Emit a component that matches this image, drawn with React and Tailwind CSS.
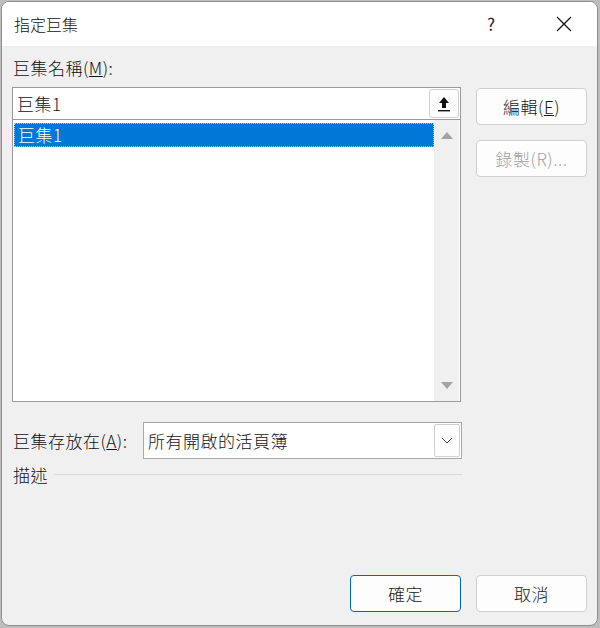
import React from "react";

const font = { fontFamily: '"Noto Sans CJK TC", "Noto Sans", sans-serif' };

const Btn = ({ children, primary, disabled, className = "" }) => (
  <div
    className={`flex items-center justify-center h-[37px] w-[111px] rounded-[4px] bg-[#fdfdfd] text-[17px] font-light ${
      primary ? "border border-[#0067c0]" : "border border-[#d0d0d0]"
    } ${disabled ? "text-[#a0a0a0] bg-[#f5f5f5]" : "text-[#1a1a1a]"} ${className}`}
  >
    {children}
  </div>
);

export default function App() {
  return (
    <div className="w-[600px] h-[628px] bg-[#bdbdbd] p-[1px] pr-[2px] pb-[2px]" style={font}>
      <div className="h-full w-full rounded-[8px] overflow-hidden border border-[#8f8f8f] bg-[#f0f0f0] flex flex-col">
        {/* title bar */}
        <div className="h-[44px] bg-white flex items-center pl-[12px] shrink-0">
          <span className="text-[16px] font-light text-[#111]">指定巨集</span>
          <span className="ml-auto text-[17px] text-[#222] mr-[60px]">?</span>
          <svg width="18" height="18" viewBox="0 0 18 18" className="mr-[24px]">
            <path d="M2 2 L16 16 M16 2 L2 16" stroke="#111" strokeWidth="1.3" />
          </svg>
        </div>

        <div className="flex-1 flex flex-col px-[10px] pt-[10px] pb-[13px] text-[17px] font-light tracking-[0.5px]">
          <div className="flex gap-[15px]">
            <div className="w-[450px] flex flex-col">
              <div className="text-[#111] leading-[24px] pl-[1px]">
                巨集名稱(<span className="underline">M</span>):
              </div>
              <div className="mt-[7px] h-[33px] bg-white border border-[#9a9a9a] flex items-center pl-[4px] pr-[1px]">
                <span className="text-[#111] leading-none">巨集1</span>
                <div className="ml-auto w-[30px] h-[29px] rounded-[3px] border border-[#d0d0d0] bg-[#fdfdfd] flex items-center justify-center">
                  <svg width="12" height="16" viewBox="0 0 12 16">
                    <path d="M6 1 L11 7 L8 7 L8 12 L4 12 L4 7 L1 7 Z" fill="#111" />
                    <rect x="0" y="14" width="12" height="1.4" fill="#111" />
                  </svg>
                </div>
              </div>
              <div className="h-[282px] bg-white border border-[#9a9a9a] border-t-0 flex">
                <div className="flex-1 pt-[3px] pl-[1px]">
                  <div className="h-[24px] bg-[#0078d7] border border-dotted border-[#9cc7ee] flex items-center pl-[3px] text-white">
                    巨集1
                  </div>
                </div>
                <div className="w-[25px] bg-[#f0f0f0] flex flex-col items-center justify-between py-[12px] mr-[1px]">
                  <svg width="12" height="7" viewBox="0 0 12 7">
                    <path d="M6 0 L12 7 L0 7 Z" fill="#a3a3a3" />
                  </svg>
                  <svg width="12" height="7" viewBox="0 0 12 7">
                    <path d="M0 0 L12 0 L6 7 Z" fill="#a3a3a3" />
                  </svg>
                </div>
              </div>
            </div>
            <div className="flex flex-col gap-[15px] pt-[32px]">
              <Btn>
                <span>
                  編輯(<span className="underline">E</span>)
                </span>
              </Btn>
              <Btn disabled>錄製(R)...</Btn>
            </div>
          </div>

          <div className="flex items-center mt-[20px] w-[450px]">
            <span className="text-[#111] pl-[1px]">
              巨集存放在(<span className="underline">A</span>):
            </span>
            <div className="ml-auto w-[319px] h-[37px] bg-white border border-[#a8a8a8] flex items-center pl-[4px] pr-[1px]">
              <span className="text-[#111]">所有開啟的活頁簿</span>
              <div className="ml-auto w-[26px] h-[33px] rounded-[2px] border border-[#d0d0d0] bg-[#fdfdfd] flex items-center justify-center">
                <svg width="12" height="7" viewBox="0 0 12 7">
                  <path d="M1 1 L6 6 L11 1" stroke="#444" strokeWidth="1" fill="none" />
                </svg>
              </div>
            </div>
          </div>

          <div className="flex items-center mt-[3px] w-[450px]">
            <span className="text-[#111] pl-[1px]">描述</span>
            <div className="flex-1 h-px bg-[#d8d8d8] ml-[6px]"></div>
          </div>

          <div className="mt-auto flex justify-end gap-[15px] pr-[0px]">
            <Btn primary>確定</Btn>
            <Btn>取消</Btn>
          </div>
        </div>
      </div>
    </div>
  );
}
